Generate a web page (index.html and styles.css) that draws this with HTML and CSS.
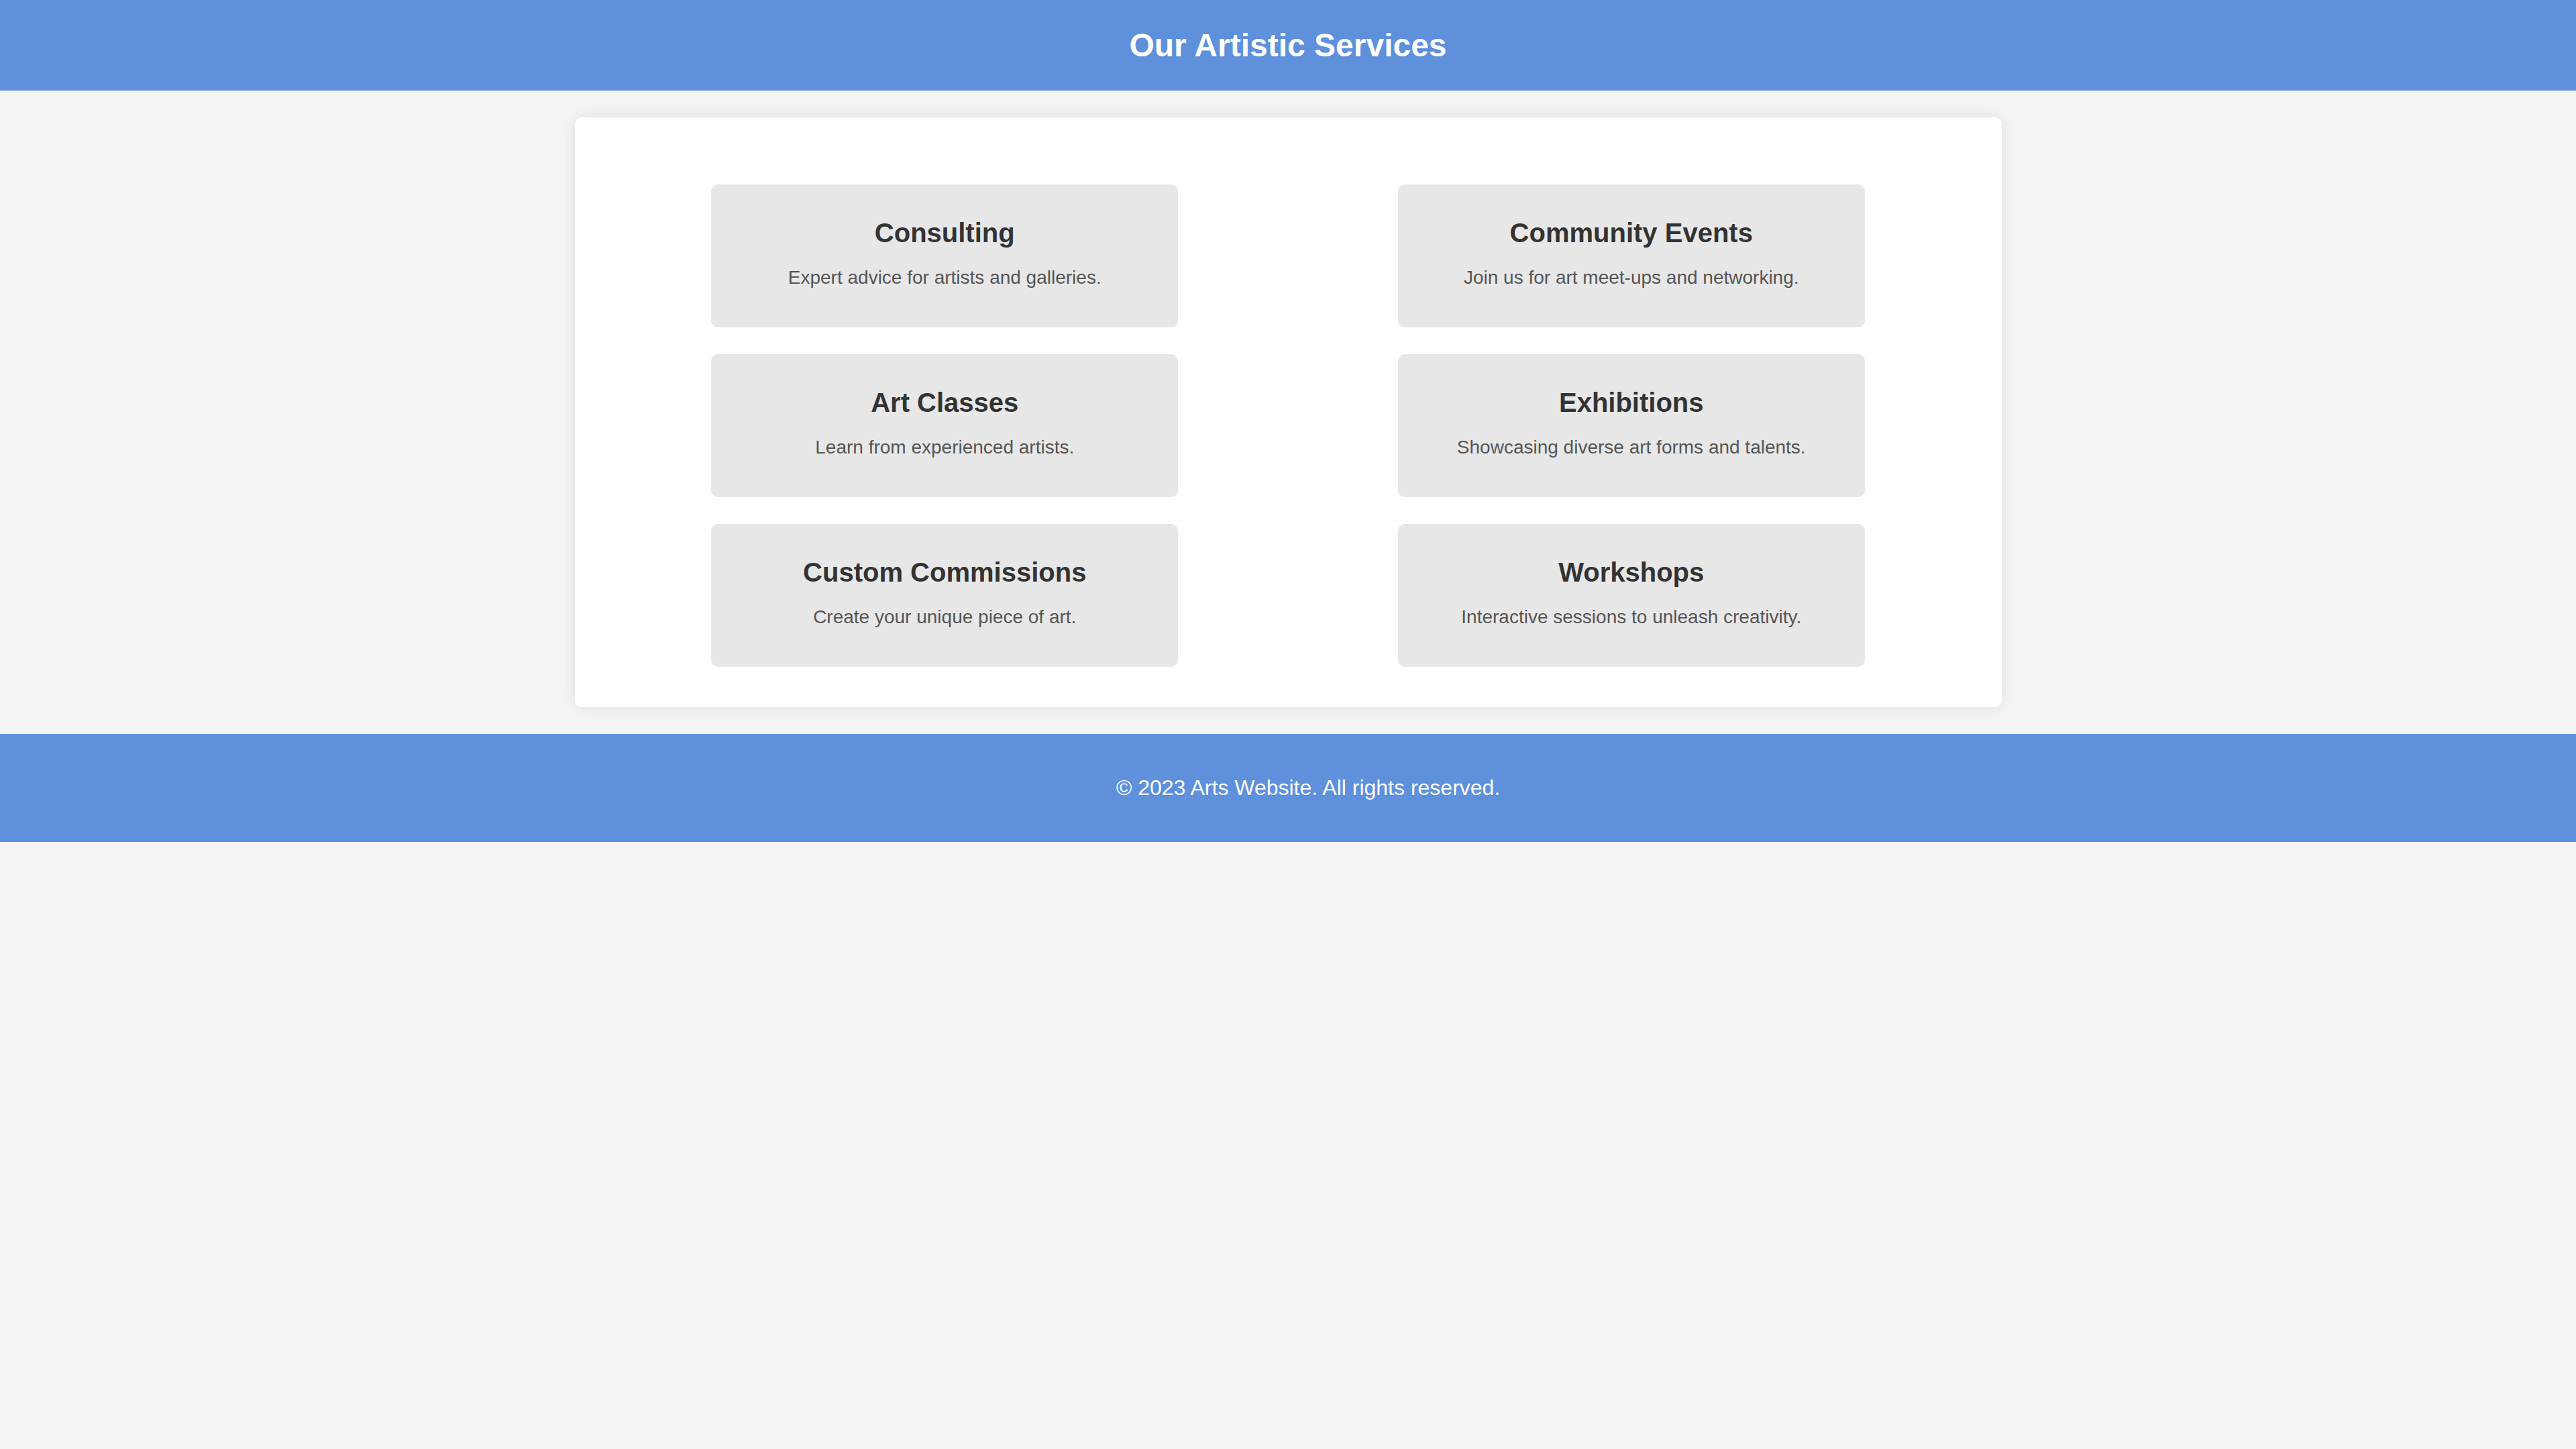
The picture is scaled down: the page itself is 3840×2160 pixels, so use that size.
FILE: index.html
```html
<!DOCTYPE html>
<html lang="en">
<head>
<meta charset="utf-8">
<title>Our Artistic Services</title>
<link rel="stylesheet" href="styles.css">
</head>
<body>
<header class="site-header">
  <h1 class="site-title">Our Artistic Services</h1>
</header>
<main class="panel">
  <div class="services">
    <div class="service">
      <h3 class="service-title">Consulting</h3>
      <p class="service-desc">Expert advice for artists and galleries.</p>
    </div>
    <div class="service">
      <h3 class="service-title">Community Events</h3>
      <p class="service-desc">Join us for art meet-ups and networking.</p>
    </div>
    <div class="service">
      <h3 class="service-title">Art Classes</h3>
      <p class="service-desc">Learn from experienced artists.</p>
    </div>
    <div class="service">
      <h3 class="service-title">Exhibitions</h3>
      <p class="service-desc">Showcasing diverse art forms and talents.</p>
    </div>
    <div class="service">
      <h3 class="service-title">Custom Commissions</h3>
      <p class="service-desc">Create your unique piece of art.</p>
    </div>
    <div class="service">
      <h3 class="service-title">Workshops</h3>
      <p class="service-desc">Interactive sessions to unleash creativity.</p>
    </div>
  </div>
</main>
<footer class="site-footer">
  <p class="footer-text">© 2023 Arts Website. All rights reserved.</p>
</footer>
</body>
</html>
```
FILE: styles.css
```css
* { box-sizing: border-box; }
html, body {
  margin: 0;
  padding: 0;
  background: #f4f4f4;
  font-family: "Liberation Sans", Arial, sans-serif;
  color: #333;
}
.site-header {
  background: #5e90dc;
  padding: 40px 0;
  text-align: center;
}
.site-title {
  margin: 0;
  font-size: 48px;
  line-height: 55px;
  font-weight: bold;
  color: #fff;
}
.panel {
  display: block;
  width: 2127px;
  margin: 40px auto;
  background: #fff;
  border-radius: 10px;
  box-shadow: 0 0 20px rgba(0, 0, 0, 0.1);
  padding: 80px 40px 40px;
}
.services {
  display: flex;
  flex-wrap: wrap;
  justify-content: space-around;
}
.service {
  width: 696px;
  margin: 20px;
  background: #e7e7e7;
  border-radius: 10px;
  padding: 49px 20px 58px;
  text-align: center;
}
.service-title {
  margin: 0 0 28px;
  font-size: 40px;
  line-height: 46px;
  font-weight: bold;
  color: #333;
}
.service-desc {
  margin: 0;
  font-size: 28px;
  line-height: 32px;
  color: #555;
}
.site-footer {
  background: #5e90dc;
  padding: 62px 0 62px 60px;
  text-align: center;
}
.footer-text {
  margin: 0;
  font-size: 32px;
  line-height: 37px;
  color: #fff;
}
```
